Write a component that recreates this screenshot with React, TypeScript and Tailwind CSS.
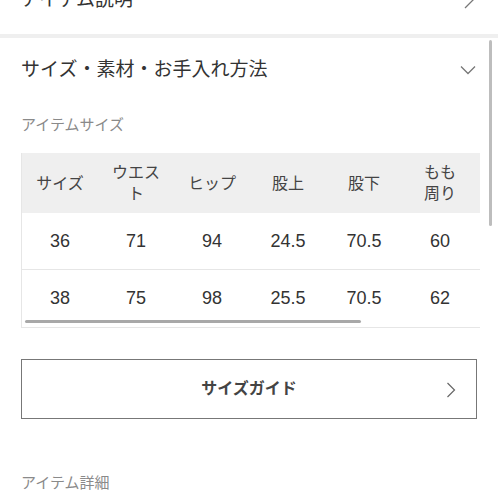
import React from "react";

const font = { fontFamily: '"Liberation Sans", "Noto Sans CJK JP", sans-serif' };

const headers: React.ReactNode[] = [
  "サイズ",
  <>ウエス<br />ト</>,
  "ヒップ",
  "股上",
  "股下",
  <>もも<br />周り</>,
  "ワタリ",
  "裾幅",
];

const rows = [
  ["36", "71", "94", "24.5", "70.5", "60", "31", "18"],
  ["38", "75", "98", "25.5", "70.5", "62", "32", "19"],
];

export default function App() {
  return (
    <div className="relative w-[498px] h-[498px] overflow-hidden bg-white text-[#333]" style={font}>
      {/* previous section */}
      <div className="h-[34px] flex items-start justify-between pl-[21px] pr-[22px] overflow-hidden">
        <span className="text-[19px] leading-[24px] -mt-[12px] text-[#333]">アイテム説明</span>
        <svg width="14" height="24" viewBox="0 0 14 24" className="-mt-[12px]">
          <path d="M3 4 L11 12 L3 20" fill="none" stroke="#777" strokeWidth="1.3" />
        </svg>
      </div>
      <div className="h-[4px] bg-[#efefef]" />

      <div className="px-[21px]">
        <div className="flex items-center justify-between pt-[19px]">
          <span className="text-[19px] leading-[26px] text-[#333]">サイズ・素材・お手入れ方法</span>
          <svg width="16" height="10" viewBox="0 0 16 10" className="mr-[1px]">
            <path d="M1 1.5 L8 8.5 L15 1.5" fill="none" stroke="#777" strokeWidth="1.3" />
          </svg>
        </div>

        <div className="mt-[32px] text-[15px] leading-[20px] text-[#8a8a8a]">アイテムサイズ</div>

        <div className="relative mt-[18px] w-[459px] overflow-hidden border-l border-b border-[#e6e6e6]">
          <div className="w-[608px]">
            <div className="flex h-[60px] bg-[#efefef]">
              {headers.map((h, i) => (
                <div key={i} className="w-[76px] shrink-0 flex items-center justify-center text-center text-[16px] leading-[21px] text-[#444]">
                  <span>{h}</span>
                </div>
              ))}
            </div>
            {rows.map((r, ri) => (
              <div key={ri} className={`flex h-[57px] ${ri === 0 ? "border-b border-[#e6e6e6]" : ""}`}>
                {r.map((c, ci) => (
                  <div key={ci} className="w-[76px] shrink-0 flex items-center justify-center text-[18px] text-[#333]">
                    {c}
                  </div>
                ))}
              </div>
            ))}
          </div>
          <div className="absolute left-[3px] bottom-[4px] w-[336px] h-[3px] rounded-full bg-[#a8a8a8]" />
        </div>

        <button className="mt-[31px] w-[456px] h-[60px] border border-[#777] flex items-center relative bg-white">
          <span className="flex-1 text-center text-[16px] font-bold text-[#444]">サイズガイド</span>
          <svg width="10" height="16" viewBox="0 0 10 16" className="absolute right-[20px] top-[22px]">
            <path d="M1.5 1 L8.5 8 L1.5 15" fill="none" stroke="#666" strokeWidth="1.2" />
          </svg>
        </button>

        <div className="mt-[54px] text-[15px] leading-[20px] text-[#8a8a8a]">アイテム詳細</div>
      </div>

      <div className="absolute left-[489px] top-[40px] w-[3px] h-[186px] rounded-full bg-[#bdbdbd]" />
    </div>
  );
}
